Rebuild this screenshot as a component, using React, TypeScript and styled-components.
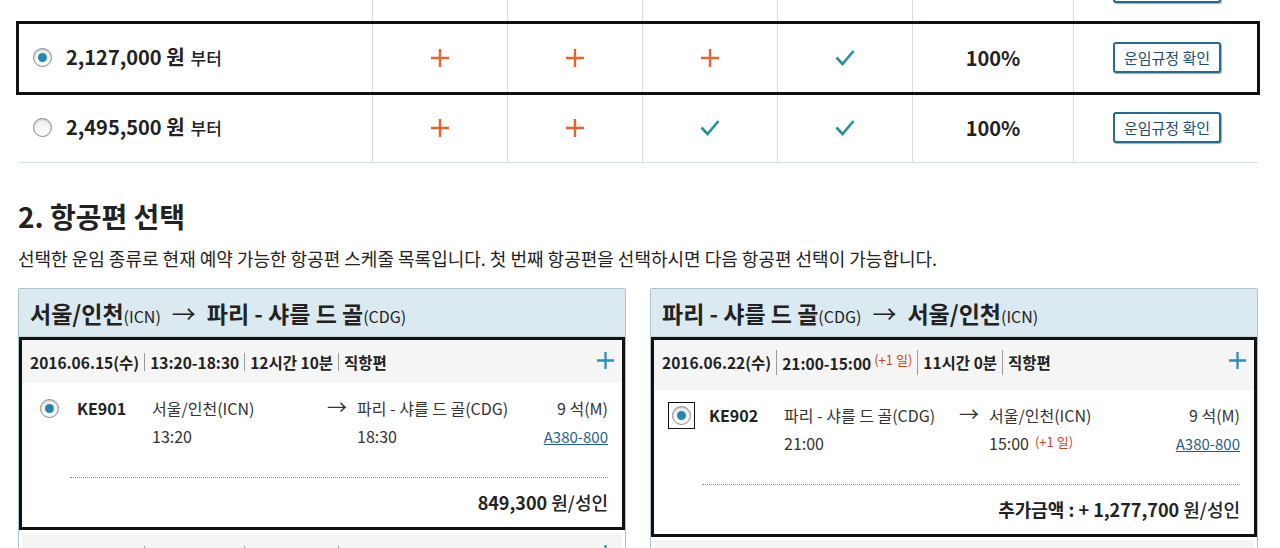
import React from 'react';
import styled, { createGlobalStyle } from 'styled-components';

const GlobalStyle = createGlobalStyle`
  html, body { margin: 0; padding: 0; background: #fff; }
  body {
    font-family: "Noto Sans CJK KR", "Noto Sans", sans-serif;
    color: #222;
    overflow: hidden;
  }
  * { box-sizing: border-box; }
`;

const Page = styled.div`
  width: 1240px;
  margin-left: 18px;
`;

/* ---------- Fare table ---------- */
const FareTable = styled.div`
  margin-top: -47px;
`;

const FareRow = styled.div<{ $selected?: boolean }>`
  display: grid;
  grid-template-columns: 354px 135px 135px 135px 135px 161px 185px;
  height: 70px;
  border-bottom: 1px solid #d3dfe6;
  outline: ${(p) => (p.$selected ? '3px solid #111' : 'none')};
  outline-offset: -1px;
`;

const FareCell = styled.div<{ $first?: boolean }>`
  display: flex;
  align-items: center;
  justify-content: ${(p) => (p.$first ? 'flex-start' : 'center')};
  padding-left: ${(p) => (p.$first ? '15px' : '0')};
  border-left: ${(p) => (p.$first ? 'none' : '1px solid #d3dfe6')};
`;

const Radio = styled.span<{ $checked?: boolean }>`
  flex: none;
  width: 19px;
  height: 19px;
  border-radius: 50%;
  border: 1px solid #8a8a8a;
  background: linear-gradient(#eeeeee, #ffffff);
  box-shadow: inset 0 1px 2px rgba(0, 0, 0, 0.18);
  display: inline-flex;
  align-items: center;
  justify-content: center;
  &::after {
    content: '';
    width: 9px;
    height: 9px;
    border-radius: 50%;
    background: ${(p) => (p.$checked ? '#2188ad' : 'transparent')};
  }
`;

const FocusFrame = styled.span<{ $focused?: boolean }>`
  display: inline-flex;
  padding: 3px;
  margin: -4px;
  border: 1px solid ${(p) => (p.$focused ? '#111' : 'transparent')};
`;

const Price = styled.span`
  margin-left: 14px;
  font-size: 20px;
  font-weight: 700;
  line-height: 28px;
  color: #222;
`;

const PriceSuffix = styled.span`
  font-size: 17px;
  font-weight: 500;
  margin-left: 6px;
`;

const Percent = styled.span`
  font-size: 20px;
  font-weight: 700;
  color: #222;
`;

const RuleButton = styled.button`
  width: 108px;
  height: 31px;
  padding: 0;
  border: 2px solid #256c8f;
  border-radius: 3px;
  background: #fff;
  box-shadow: 1px 1px 1px rgba(0, 0, 0, 0.35);
  color: #1b4e6d;
  font-family: "Noto Sans CJK KR", sans-serif;
  font-size: 15px;
  line-height: 26px;
  margin-left: 2px;
`;

const PlusMark = ({ color = '#e8632b', size = 20 }: { color?: string; size?: number }) => (
  <svg width={size} height={size} viewBox="0 0 20 20">
    <path d="M10 1v18M1 10h18" stroke={color} strokeWidth="2.4" fill="none" />
  </svg>
);

const CheckMark = () => (
  <svg width="20" height="18" viewBox="0 0 20 18">
    <path d="M1.5 8.5 L7.5 15 L18.5 2" stroke="#25909a" strokeWidth="2.6" fill="none" />
  </svg>
);

type Mark = 'plus' | 'check';
const fares: { price: string; marks: Mark[]; selected?: boolean; checked?: boolean }[] = [
  { price: '1,837,000', marks: ['plus', 'plus', 'plus', 'plus'] },
  { price: '2,127,000', marks: ['plus', 'plus', 'plus', 'check'], selected: true, checked: true },
  { price: '2,495,500', marks: ['plus', 'plus', 'check', 'check'] },
];

/* ---------- Section heading ---------- */
const Title = styled.h2`
  margin: 35px 0 0;
  font-size: 28px;
  font-weight: 700;
  line-height: 36px;
  color: #222;
`;

const Lead = styled.p`
  margin: 12px 0 0;
  font-size: 18px;
  line-height: 24px;
  color: #222;
  white-space: nowrap;
`;

/* ---------- Flight cards ---------- */
const Cards = styled.div`
  display: grid;
  grid-template-columns: 608px 608px;
  gap: 24px;
  margin-top: 18px;
`;

const Card = styled.div`
  border: 1px solid #a9c3d0;
  border-bottom: none;
  border-radius: 2px 2px 0 0;
`;

const CardHeader = styled.div`
  height: 48px;
  background: #dbe9f0;
  border-bottom: 1px solid #c6d7e0;
  display: flex;
  align-items: center;
  padding: 0 11px 0;
  font-size: 23px;
  font-weight: 700;
  color: #222;
`;

const Code = styled.span`
  font-size: 16px;
  font-weight: 400;
  margin-top: 6px;
`;

const HeadArrow = styled.span`
  font-weight: 400;
  font-size: 24px;
  margin: 0 11px 0 11px;
`;

const Item = styled.div<{ $selected?: boolean }>`
  border: 3px solid ${(p) => (p.$selected ? '#111' : 'transparent')};
`;

const Strip = styled.div<{ $tall?: boolean }>`
  display: flex;
  align-items: center;
  justify-content: space-between;
  background: #f5f5f5;
  height: ${(p) => (p.$tall ? '50px' : '43px')};
  padding: 0 7px 0 8px;
`;

const StripInfo = styled.div<{ $tall?: boolean }>`
  display: flex;
  align-items: center;
  font-size: 15.5px;
  font-weight: 700;
  line-height: 18px;
  color: #222;
  margin-top: ${(p) => (p.$tall ? '-6px' : '0')};
`;

const Sep = styled.span<{ $tall?: boolean }>`
  width: 1px;
  height: ${(p) => (p.$tall ? '25px' : '18px')};
  background: #9a9a9a;
  margin: 0 5px;
`;

const DayNote = styled.span<{ $super?: boolean }>`
  font-size: 13px;
  font-weight: 400;
  color: #c4461a;
  margin-left: ${(p) => (p.$super ? '3px' : '6px')};
  position: relative;
  top: ${(p) => (p.$super ? '-3px' : '-2px')};
`;

const TimeRange = styled.span`
  position: relative;
  top: 2px;
`;

const StripPlus = styled.span<{ $tall?: boolean }>`
  display: inline-flex;
  margin-top: ${(p) => (p.$tall ? '-10px' : '-2px')};
`;

const FlightBody = styled.div`
  display: grid;
  grid-template-columns: 37px 75px 175px 30px 1fr auto;
  grid-template-areas:
    'radio num from arrow to seats'
    '. . dep . arr craft';
  grid-auto-rows: 28px;
  align-items: center;
  padding: 11px 14px 0 18px;
  font-size: 16px;
  color: #333;
`;

const Area = styled.div<{ $area: string; $end?: boolean }>`
  grid-area: ${(p) => p.$area};
  justify-self: ${(p) => (p.$end ? 'end' : 'start')};
  white-space: nowrap;
  display: flex;
  align-items: center;
`;

const FlightNo = styled.span`
  font-weight: 700;
  color: #222;
  font-size: 16px;
`;

const Arrow = styled.span`
  font-size: 20px;
  color: #333;
  line-height: 1;
  margin-top: -2px;
`;

const Aircraft = styled.a`
  color: #1f5f87;
  text-decoration: underline;
  font-size: 15px;
`;

const Dotted = styled.div`
  margin: 27px 14px 0 48px;
  border-top: 1px dotted #8a8a8a;
`;

const Total = styled.div`
  text-align: right;
  padding: 10px 14px 11px;
  font-size: 18px;
  font-weight: 700;
  line-height: 28px;
  color: #222;
`;

const TotalUnit = styled.span`
  font-weight: 500;
`;

type Flight = {
  date: string;
  time: string;
  nextDay?: boolean;
  duration: string;
  kind: string;
  no: string;
  from: string;
  to: string;
  dep: string;
  arr: string;
  seats: string;
  craft: string;
  total: string;
};

const FlightItem = ({ f, selected, focused }: { f: Flight; selected?: boolean; focused?: boolean }) => (
  <Item $selected={selected}>
    <Strip $tall={f.nextDay}>
      <StripInfo $tall={f.nextDay}>
        <span>{f.date}</span>
        <Sep $tall={f.nextDay} />
        {f.nextDay ? (
          <span>
            <TimeRange>{f.time}</TimeRange>
            <DayNote $super>(+1 일)</DayNote>
          </span>
        ) : (
          <span>{f.time}</span>
        )}
        <Sep $tall={f.nextDay} />
        <span>{f.duration}</span>
        <Sep $tall={f.nextDay} />
        <span>{f.kind}</span>
      </StripInfo>
      <StripPlus $tall={f.nextDay}>
        <PlusMark color="#2a90b6" size={19} />
      </StripPlus>
    </Strip>
    {selected && (
      <>
        <FlightBody>
          <Area $area="radio">
            <FocusFrame $focused={focused}>
              <Radio $checked />
            </FocusFrame>
          </Area>
          <Area $area="num">
            <FlightNo>{f.no}</FlightNo>
          </Area>
          <Area $area="from">{f.from}</Area>
          <Area $area="arrow">
            <Arrow>→</Arrow>
          </Area>
          <Area $area="to">{f.to}</Area>
          <Area $area="seats" $end>
            {f.seats}
          </Area>
          <Area $area="dep">{f.dep}</Area>
          <Area $area="arr">
            {f.arr}
            {f.nextDay && <DayNote>(+1 일)</DayNote>}
          </Area>
          <Area $area="craft" $end>
            <Aircraft href="#">{f.craft}</Aircraft>
          </Area>
        </FlightBody>
        <Dotted />
        <Total>
          {f.total} <TotalUnit>원/성인</TotalUnit>
        </Total>
      </>
    )}
  </Item>
);

const outbound: Flight = {
  date: '2016.06.15(수)',
  time: '13:20-18:30',
  duration: '12시간 10분',
  kind: '직항편',
  no: 'KE901',
  from: '서울/인천(ICN)',
  to: '파리 - 샤를 드 골(CDG)',
  dep: '13:20',
  arr: '18:30',
  seats: '9 석(M)',
  craft: 'A380-800',
  total: '849,300',
};

const outbound2: Flight = {
  ...outbound,
  time: '09:30-14:10',
  duration: '11시간 50분',
  no: 'KE905',
};

const inbound: Flight = {
  date: '2016.06.22(수)',
  time: '21:00-15:00',
  nextDay: true,
  duration: '11시간 0분',
  kind: '직항편',
  no: 'KE902',
  from: '파리 - 샤를 드 골(CDG)',
  to: '서울/인천(ICN)',
  dep: '21:00',
  arr: '15:00',
  seats: '9 석(M)',
  craft: 'A380-800',
  total: '추가금액 : + 1,277,700',
};

const inbound2: Flight = {
  ...inbound,
  date: '2016.06.23(목)',
  time: '13:00-07:55',
  nextDay: false,
  duration: '10시간 55분',
  no: 'KE904',
};

export default function App() {
  return (
    <>
      <GlobalStyle />
      <Page>
        <FareTable>
          {fares.map((fare) => (
            <FareRow key={fare.price} $selected={fare.selected}>
              <FareCell $first>
                <Radio $checked={fare.checked} />
                <Price>
                  {fare.price} 원<PriceSuffix>부터</PriceSuffix>
                </Price>
              </FareCell>
              {fare.marks.map((m, i) => (
                <FareCell key={i}>{m === 'plus' ? <PlusMark /> : <CheckMark />}</FareCell>
              ))}
              <FareCell>
                <Percent>100%</Percent>
              </FareCell>
              <FareCell>
                <RuleButton>운임규정 확인</RuleButton>
              </FareCell>
            </FareRow>
          ))}
        </FareTable>

        <Title>2. 항공편 선택</Title>
        <Lead>
          선택한 운임 종류로 현재 예약 가능한 항공편 스케줄 목록입니다. 첫 번째 항공편을 선택하시면 다음 항공편 선택이
          가능합니다.
        </Lead>

        <Cards>
          <Card>
            <CardHeader>
              서울/인천<Code>(ICN)</Code>
              <HeadArrow>→</HeadArrow>
              파리 - 샤를 드 골<Code>(CDG)</Code>
            </CardHeader>
            <FlightItem f={outbound} selected />
            <FlightItem f={outbound2} />
          </Card>
          <Card>
            <CardHeader>
              파리 - 샤를 드 골<Code>(CDG)</Code>
              <HeadArrow>→</HeadArrow>
              서울/인천<Code>(ICN)</Code>
            </CardHeader>
            <FlightItem f={inbound} selected focused />
            <FlightItem f={inbound2} />
          </Card>
        </Cards>
      </Page>
    </>
  );
}
